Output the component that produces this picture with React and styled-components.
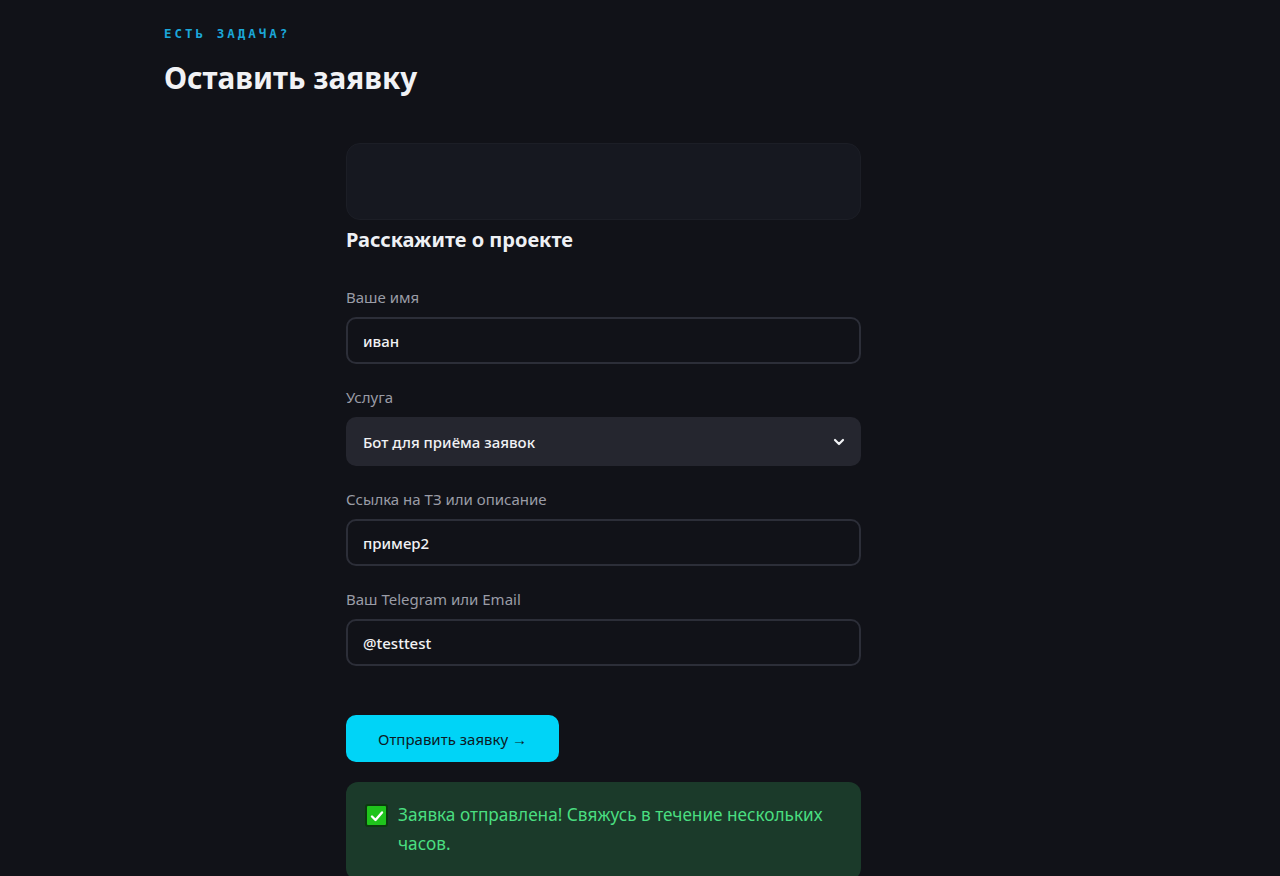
import React from "react";
import styled, { createGlobalStyle } from "styled-components";

const GlobalStyle = createGlobalStyle`
  html, body {
    margin: 0;
    padding: 0;
    background: #111218;
    color: #eef0f4;
    font-family: "Noto Sans", "Open Sans", sans-serif;
  }
  * {
    box-sizing: border-box;
  }
`;

const Page = styled.section`
  min-height: 876px;
  padding: 25px 0 0 164px;
`;

const Eyebrow = styled.div`
  font-family: "DejaVu Sans Mono", "Liberation Mono", monospace;
  font-size: 12.5px;
  font-weight: 700;
  letter-spacing: 3px;
  color: #1ba7d9;
  line-height: 18px;
`;

const Title = styled.h1`
  margin: 15px 0 0;
  font-size: 29.7px;
  font-weight: 700;
  line-height: 40px;
  color: #f1f2f5;
`;

const Form = styled.form`
  width: 515px;
  margin: 45px 0 0 182px;
  display: flex;
  flex-direction: column;
`;

const EmptyCard = styled.div`
  height: 77px;
  border-radius: 14px;
  background: #161820;
  border: 1px solid #1c1e26;
`;

const FormTitle = styled.h2`
  margin: 6px 0 0;
  font-size: 20px;
  font-weight: 700;
  line-height: 28px;
  color: #eef0f4;
`;

const Field = styled.label`
  display: flex;
  flex-direction: column;
  gap: 10px;
  margin-top: ${({ $first }) => ($first ? "33px" : "23px")};
`;

const Label = styled.span`
  font-size: 15px;
  line-height: 20px;
  color: #9a9ca6;
`;

const Input = styled.input`
  height: 47px;
  padding: 0 15px;
  border-radius: 10px;
  border: 2px solid #2c2e38;
  background: #111218;
  color: #f1f2f5;
  font-family: inherit;
  font-size: 15px;
  font-weight: 500;
  outline: none;
`;

const SelectBox = styled.div`
  height: 49px;
  padding: 0 16px 0 17px;
  border-radius: 10px;
  background: #25262f;
  display: flex;
  align-items: center;
  justify-content: space-between;
  font-size: 15px;
  font-weight: 500;
  color: #f1f2f5;
`;

const Chevron = () => (
  <svg width="12" height="8" viewBox="0 0 12 8" fill="none">
    <path
      d="M2 2l4 4 4-4"
      stroke="#f1f2f5"
      strokeWidth="2.2"
      strokeLinecap="round"
      strokeLinejoin="round"
    />
  </svg>
);

const SubmitButton = styled.button`
  align-self: flex-start;
  margin-top: 49px;
  width: 213px;
  height: 47px;
  border: none;
  border-radius: 10px;
  background: #00d4f7;
  color: #0d1a24;
  font-family: inherit;
  font-size: 15px;
  font-weight: 400;
  cursor: pointer;
`;

const Success = styled.div`
  margin-top: 20px;
  padding: 18px 24px 22px 19px;
  border-radius: 12px;
  background: #1b3a2a;
  display: flex;
  align-items: flex-start;
  gap: 10px;
  color: #4ade80;
  font-size: 17.2px;
  line-height: 29px;
`;

const CheckIcon = styled.span`
  flex: none;
  margin-top: 4px;
  width: 23px;
  height: 23px;
  border-radius: 3px;
  background: #1fc41c;
  border: 2px solid #0c3a10;
  display: flex;
  align-items: center;
  justify-content: center;
`;

export default function App() {
  return (
    <>
      <GlobalStyle />
      <Page>
        <Eyebrow>ЕСТЬ ЗАДАЧА?</Eyebrow>
        <Title>Оставить заявку</Title>
        <Form onSubmit={(e) => e.preventDefault()}>
          <EmptyCard />
          <FormTitle>Расскажите о проекте</FormTitle>
          <Field $first>
            <Label>Ваше имя</Label>
            <Input defaultValue="иван" />
          </Field>
          <Field>
            <Label>Услуга</Label>
            <SelectBox>
              Бот для приёма заявок
              <Chevron />
            </SelectBox>
          </Field>
          <Field>
            <Label>Ссылка на ТЗ или описание</Label>
            <Input defaultValue="пример2" />
          </Field>
          <Field>
            <Label>Ваш Telegram или Email</Label>
            <Input defaultValue="@testtest" />
          </Field>
          <SubmitButton type="submit">Отправить заявку →</SubmitButton>
          <Success>
            <CheckIcon>
              <svg width="14" height="12" viewBox="0 0 14 12" fill="none">
                <path
                  d="M2 6.5l3.5 3.5L12 2.5"
                  stroke="#fff"
                  strokeWidth="2.4"
                  strokeLinecap="round"
                  strokeLinejoin="round"
                />
              </svg>
            </CheckIcon>
            <span>Заявка отправлена! Свяжусь в течение нескольких часов.</span>
          </Success>
        </Form>
      </Page>
    </>
  );
}
